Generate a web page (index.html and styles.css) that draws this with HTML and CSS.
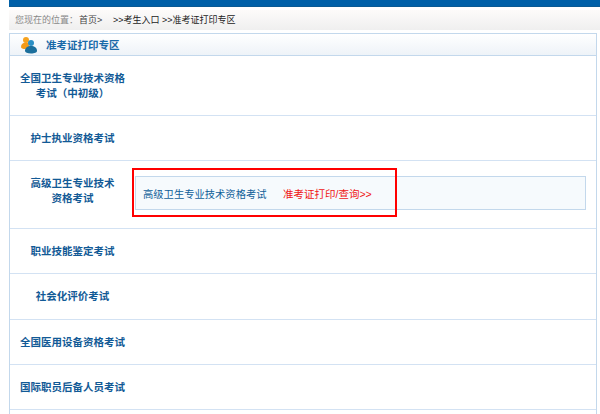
FILE: index.html
```html
<!DOCTYPE html>
<html lang="en">
<head>
  <meta charset="UTF-8">
  <title>准考证打印专区</title>
  <link rel="stylesheet" href="styles.css">
</head>
<body>
  <div class="topbar"></div>
  <div class="crumbs">
    <span class="here">您现在的位置：</span>
    <span class="home">首页&gt;</span>
    <span class="step">&gt;&gt;考生入口</span>
    <span class="step">&gt;&gt;准考证打印专区</span>
  </div>
  <div class="panel">
    <div class="panel-head">
      <svg class="users" width="18" height="18" viewBox="0 0 18 18">
        <circle cx="6" cy="4" r="3" fill="#f6a21e"/>
        <path d="M1 11c0-3 2-4.500 5-4.500S9 8 9 12l-4 1c-2 0-4-.5-4-2z" fill="#f39a18"/>
        <circle cx="11" cy="7" r="3" fill="#2b8fc4"/>
        <path d="M5 15c0-3.500 2.500-5 6-5s6 1.500 6 5c0 1.500-2.500 2.500-6 2.500S5 16.500 5 15z" fill="#1b6f9c"/>
      </svg>
      <span>准考证打印专区</span>
    </div>
    <div class="row row-a">
      <div class="name">全国卫生专业技术资格<br>考试（中初级）</div>
    </div>
    <div class="row row-b">
      <div class="name">护士执业资格考试</div>
    </div>
    <div class="row row-c">
      <div class="name name-up">高级卫生专业技术<br>资格考试</div>
      <div class="exam">
        <span class="exam-name">高级卫生专业技术资格考试</span>
        <a class="exam-link" href="#">准考证打印/查询&gt;&gt;</a>
      </div>
      <div class="mark"></div>
    </div>
    <div class="row row-b">
      <div class="name">职业技能鉴定考试</div>
    </div>
    <div class="row row-d">
      <div class="name">社会化评价考试</div>
    </div>
    <div class="row row-b">
      <div class="name">全国医用设备资格考试</div>
    </div>
    <div class="row row-b">
      <div class="name">国际职员后备人员考试</div>
    </div>
    <div class="row-end"></div>
  </div>
</body>
</html>
```

FILE: styles.css
```css
html, body {
  margin: 0;
  height: 414px;
  overflow: hidden;
}

body {
  background: #fff;
  padding-left: 9px;
  font-family: "Liberation Sans", "Noto Sans CJK SC", sans-serif;
  font-size: 10.5px;
}

.topbar {
  height: 6px;
  background: #0060a8;
  border-bottom: 1px solid #0a5a94;
}

.crumbs {
  display: flex;
  align-items: center;
  height: 20px;
  margin-top: 3px;
  padding-left: 6px;
  background: linear-gradient(#fdfbfa, #efefef);
  color: #222;
  font-size: 9px;
  line-height: 20px;
  white-space: nowrap;
}

.here {
  color: #888;
  width: 64px;
}

.home {
  width: 34px;
  color: #444;
}

.step {
  width: 49px;
}

.panel {
  width: 586px;
  margin-top: 3px;
  border: 1px solid #c3d8ec;
  border-bottom: none;
}

.panel-head {
  display: flex;
  align-items: center;
  height: 21px;
  padding-left: 10px;
  background: linear-gradient(#fff, #eef3f8);
  border-bottom: 1px solid #c3d8ec;
  color: #1a6aa8;
  font-weight: bold;
}

.users {
  width: 18px;
  height: 18px;
  margin-right: 8px;
}

.row {
  position: relative;
  display: flex;
  align-items: center;
  border-bottom: 1px solid #d3e2f3;
}

.row-a {
  height: 59px;
}

.row-b {
  height: 44px;
}

.row-c {
  height: 67px;
}

.row-d {
  height: 45px;
}

.row-end {
  height: 4px;
}

.name {
  width: 125px;
  flex: none;
  text-align: center;
  line-height: 15px;
  font-weight: bold;
  color: #125a96;
}

.name-up {
  padding-bottom: 8px;
}

.exam {
  display: flex;
  align-items: center;
  width: 442px;
  height: 32px;
  margin-bottom: 3px;
  padding-left: 7px;
  background: #f6fafd;
  border: 1px solid #c3d8ec;
  color: #0f6099;
  font-size: 10.3px;
}

.exam-name {
  width: 140px;
}

.exam-link {
  color: #f01414;
  font-size: 10.5px;
  text-decoration: none;
}

.mark {
  position: absolute;
  left: 122px;
  top: 7px;
  width: 261px;
  height: 45px;
  border: 2px solid #f00;
}
```
